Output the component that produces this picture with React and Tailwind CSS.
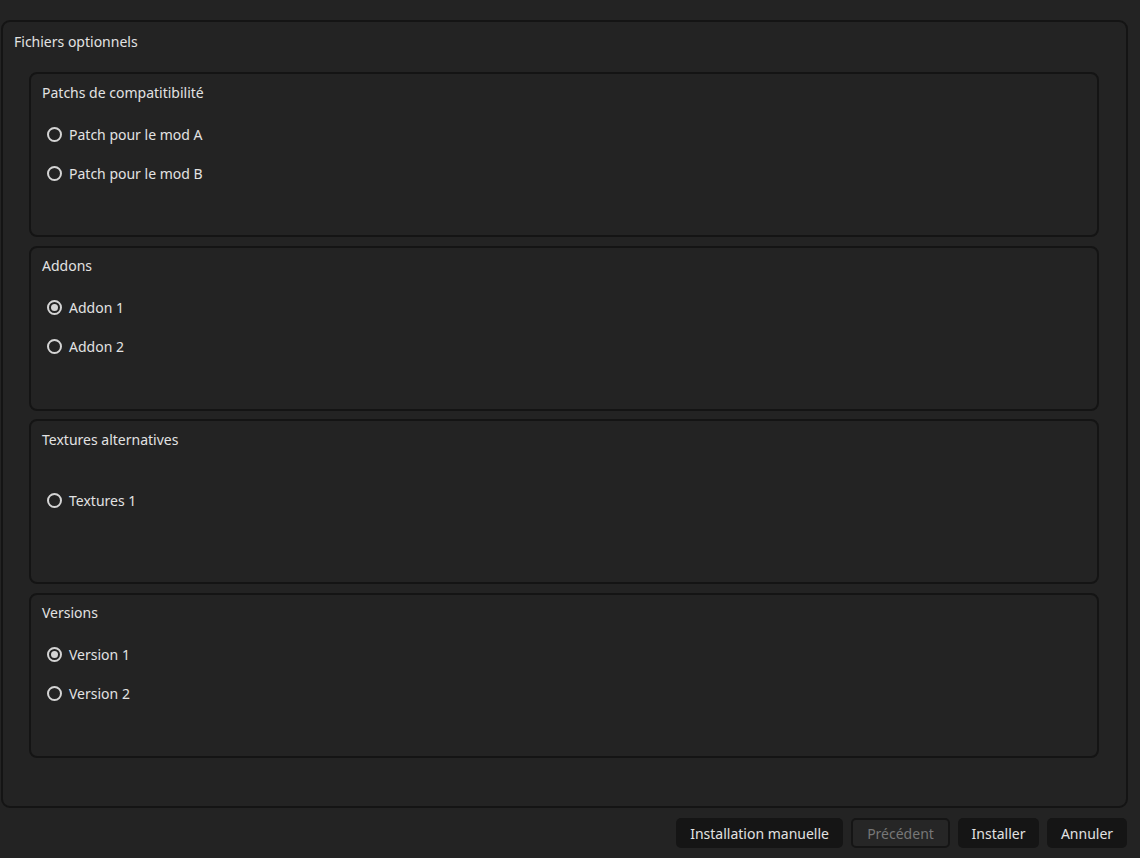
import React from "react";

function Radio({ checked, label }) {
  return (
    <div className="flex items-center h-[20px]">
      <span className="w-[15px] h-[15px] rounded-full border-2 border-[#d4d4d4] flex items-center justify-center">
        {checked && <span className="w-[7px] h-[7px] rounded-full bg-[#d4d4d4]" />}
      </span>
      <span className="ml-[7px] text-[#e2e2e2]">{label}</span>
    </div>
  );
}

function Group({ title, items, single }) {
  return (
    <div className="h-[165px] border-2 border-[#141414] rounded-[8px] px-[11px] pt-[8px]">
      <div className="text-[#e2e2e2] h-[20px] flex items-center">{title}</div>
      <div className={`flex flex-col gap-[19px] pl-[5px] ${single ? "mt-[41px]" : "mt-[22px]"}`}>
        {items.map((it) => (
          <Radio key={it.label} {...it} />
        ))}
      </div>
    </div>
  );
}

export default function App() {
  return (
    <div
      className="w-[1140px] h-[858px] bg-[#232323] text-[14px] pt-[20px] overflow-hidden"
      style={{ fontFamily: '"Noto Sans", "Open Sans", sans-serif' }}
    >
      <div className="ml-[1px] w-[1127px] h-[788px] border-2 border-[#141414] rounded-[9px] pl-[26px] pr-[27px] pt-[9px]">
        <div className="text-[#e2e2e2] h-[20px] flex items-center -ml-[15px]">Fichiers optionnels</div>
        <div className="mt-[21px] flex flex-col gap-[8.5px]">
          <Group
            title="Patchs de compatitibilité"
            items={[{ label: "Patch pour le mod A" }, { label: "Patch pour le mod B" }]}
          />
          <Group
            title="Addons"
            items={[{ label: "Addon 1", checked: true }, { label: "Addon 2" }]}
          />
          <Group title="Textures alternatives" single items={[{ label: "Textures 1" }]} />
          <Group
            title="Versions"
            items={[{ label: "Version 1", checked: true }, { label: "Version 2" }]}
          />
        </div>
      </div>
      <div className="flex justify-end gap-[8px] mt-[10px] pr-[13px]">
        <button className="h-[30px] px-[14px] rounded-[5px] bg-[#151515] text-[#e2e2e2]">Installation manuelle</button>
        <button className="h-[30px] w-[99px] rounded-[5px] bg-[#262626] border-2 border-[#151515] text-[#777777]">Précédent</button>
        <button className="h-[30px] w-[81px] rounded-[5px] bg-[#151515] text-[#e2e2e2]">Installer</button>
        <button className="h-[30px] w-[80px] rounded-[5px] bg-[#151515] text-[#e2e2e2]">Annuler</button>
      </div>
    </div>
  );
}
